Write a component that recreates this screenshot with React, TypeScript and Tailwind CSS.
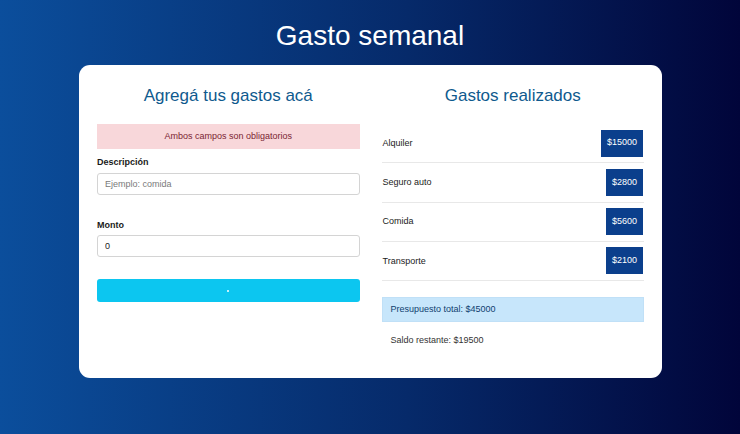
import React from "react";

const gastos = [
  { nombre: "Alquiler", monto: "$15000" },
  { nombre: "Seguro auto", monto: "$2800" },
  { nombre: "Comida", monto: "$5600" },
  { nombre: "Transporte", monto: "$2100" },
];

export default function App() {
  return (
    <div
      className="w-[740px] h-[434px] overflow-hidden bg-[linear-gradient(to_right,#0b4e9c,#062a6a_55%,#01053a)] flex flex-col items-center"
      style={{ fontFamily: '"Liberation Sans", Arial, sans-serif' }}
    >
      <h1 className="mt-[18px] text-[28px] leading-[36px] text-white font-normal">Gasto semanal</h1>
      <div className="mt-[11px] ml-[1px] w-[583px] h-[313px] bg-white rounded-[11px] px-[18px] pt-[19px] grid grid-cols-2 gap-[22px]">
        <div className="flex flex-col">
          <h2 className="text-[17px] leading-[24px] text-center text-[#0f5a8e]">Agregá tus gastos acá</h2>
          <div className="mt-[16px] h-[25px] bg-[#f8d7da] flex items-center justify-center text-[9px] text-[#7a2533]">
            Ambos campos son obligatorios
          </div>
          <label className="mt-[6px] text-[9px] leading-[14px] font-bold text-[#1a1a1a]">Descripción</label>
          <input
            className="mt-[4px] h-[22px] border border-[#d4d4d4] rounded-[3px] px-[7px] text-[9px] text-[#333] placeholder:text-[#7a7a7a] outline-none"
            placeholder="Ejemplo: comida"
            readOnly
          />
          <label className="mt-[23px] text-[9px] leading-[14px] font-bold text-[#1a1a1a]">Monto</label>
          <input
            className="mt-[3px] h-[22px] border border-[#d4d4d4] rounded-[3px] px-[7px] text-[9px] text-[#222] outline-none"
            value="0"
            readOnly
          />
          <button className="mt-[22px] h-[23px] bg-[#0cc6f0] rounded-[3px] flex items-center justify-center">
            <span className="block w-[2px] h-[2px] bg-white rounded-full"></span>
          </button>
        </div>
        <div className="flex flex-col">
          <h2 className="text-[17px] leading-[24px] text-center text-[#0f5a8e]">Gastos realizados</h2>
          <ul className="mt-[16px]">
            {gastos.map((g) => (
              <li
                key={g.nombre}
                className="h-[39.25px] border-b border-[#e8e8e8] flex items-center justify-between pl-[1px] pr-[1px]"
              >
                <span className="text-[9px] text-[#222] pt-[1px]">{g.nombre}</span>
                <span className="h-[27px] px-[6px] bg-[#0b3f8c] text-white text-[9px] flex items-center">{g.monto}</span>
              </li>
            ))}
          </ul>
          <div className="mt-[16px] h-[25px] bg-[#c7e6fb] border border-[#c0e0f7] flex items-center pl-[8px] text-[9px] text-[#0f3e70]">
            Presupuesto total: $45000
          </div>
          <div className="mt-[12px] pl-[9px] text-[9px] text-[#333]">Saldo restante: $19500</div>
        </div>
      </div>
    </div>
  );
}
